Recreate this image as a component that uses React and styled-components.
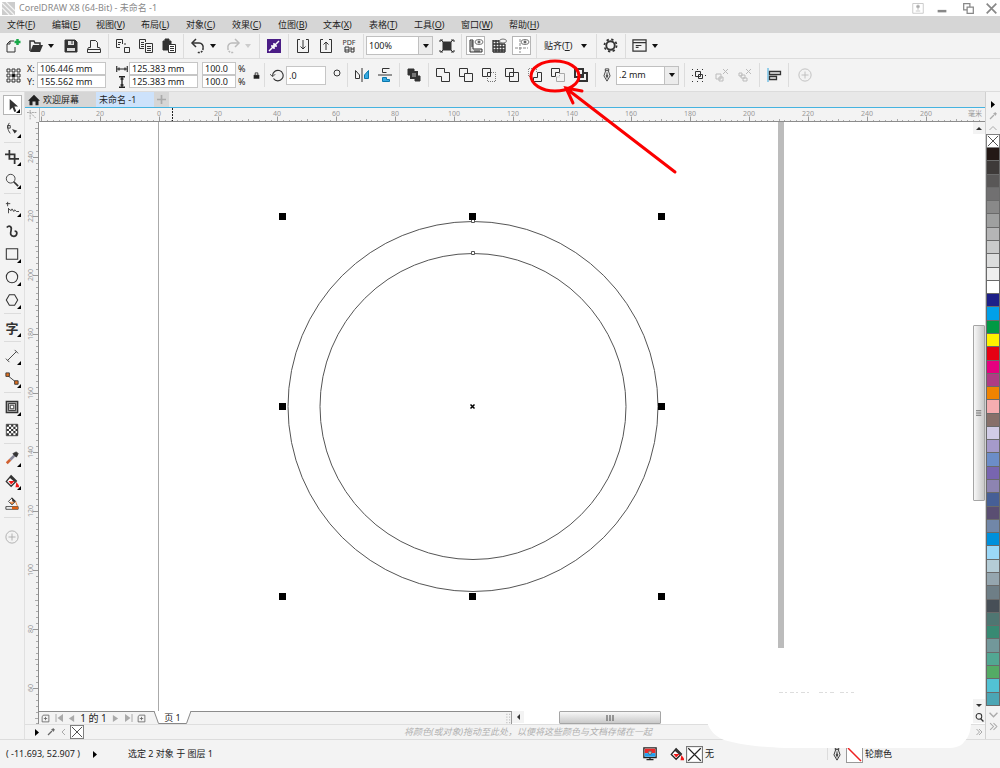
import React from 'react';
import styled, { createGlobalStyle } from 'styled-components';

const GlobalStyle = createGlobalStyle`
  * {
    box-sizing: border-box;
  }
  body {
    margin: 0;
  }
  button, input, select {
    font: inherit;
    color: inherit;
    margin: 0;
    padding: 0;
    border: 0;
    background: none;
  }
`;

const Shell = styled.div`
  position: relative;
  display: flex;
  flex-direction: column;
  height: 100vh;
  min-height: 640px;
  overflow: hidden;
  background: #f3f3f3;
  color: #222;
  font-family: 'Noto Sans', 'Noto Sans CJK SC', sans-serif;
  font-size: 9px;
  line-height: 12px;
  white-space: nowrap;
`;

const Svg = styled.svg`
  display: block;
  flex: none;
  fill: none;
  stroke: currentColor;
  stroke-width: 1;
`;

/* title + menu */
const TitleBar = styled.header`
  display: flex;
  align-items: center;
  flex: none;
  height: 16px;
  padding-left: 2px;
  gap: 4px;
  background: white;
  color: #888;
`;
const Title = styled.h1`
  flex: 1;
  margin: 0;
  font-size: 9px;
  font-weight: normal;
`;
const WindowButton = styled.button`
  display: flex;
  align-items: center;
  justify-content: center;
  width: ${({ $w }) => $w || 22}px;
  height: 16px;
`;
const MenuBar = styled.nav`
  display: flex;
  align-items: center;
  flex: none;
  height: 17px;
  padding-left: 7px;
  gap: 16px;
  background: #d6d6d6;
`;
const MenuItem = styled.button`
  width: ${({ $w }) => $w || 29}px;
  text-align: left;
`;

/* bars */
const Toolbar = styled.div`
  display: flex;
  align-items: center;
  flex: none;
  height: ${({ $h }) => $h}px;
  padding-left: 1px;
  border-bottom: 1px solid #dcdcdc;
`;
const IconButton = styled.button`
  display: flex;
  align-items: center;
  justify-content: center;
  flex: none;
  width: ${({ $w }) => $w || 23}px;
  height: 20px;
  color: ${({ $off }) => ($off ? '#bbb' : '#333')};
`;
const BoxedButton = styled(IconButton)`
  width: 19px;
  height: 19px;
  margin: 0 2px;
  border: 1px solid #b5b5b5;
  background: white;
`;
const TextButton = styled.button`
  display: flex;
  align-items: center;
  gap: 8px;
  padding: 0 5px;
`;
const Sep = styled.span`
  flex: none;
  width: 6px;
  height: ${({ $h }) => $h || 24}px;
  border-left: 3px solid transparent;
  background: linear-gradient(90deg, #dcdcdc 1px, transparent 1px) no-repeat;
`;
const Field = styled.input`
  width: ${({ $w }) => $w}px;
  height: ${({ $h }) => $h || 13}px;
  padding: 0 2px;
  border: 1px solid #c6c6c6;
  background: white;
`;
const FieldGrid = styled.div`
  display: grid;
  grid-template-columns: ${({ $label }) => $label}px auto;
  align-items: center;
  margin-left: ${({ $gap }) => $gap}px;
`;
const UnitGrid = styled.div`
  display: grid;
  grid-template-columns: 34px 14px;
  column-gap: 2px;
  align-items: center;
  margin-left: 4px;
`;
const Picker = styled.div`
  position: relative;
  width: ${({ $w }) => $w}px;
  height: 19px;
  margin-right: 2px;
  border: 1px solid #c0c0c0;
  background: white;

  select {
    display: block;
    width: 100%;
    height: 17px;
    padding-left: 2px;
    appearance: none;
  }
`;
const PickerArrow = styled.span`
  position: absolute;
  top: 0;
  right: 0;
  display: flex;
  align-items: center;
  justify-content: center;
  width: 14px;
  height: 17px;
  border-left: 1px solid #c0c0c0;
  background: #ececec;
  pointer-events: none;
`;

/* body */
const Body = styled.div`
  display: flex;
  flex: 1;
  min-height: 0;
`;
const Toolbox = styled.aside`
  display: flex;
  flex-direction: column;
  flex: none;
  width: 25px;
  padding-top: 3px;
  border-right: 1px solid #e0e0e0;
`;
const Tool = styled.button`
  position: relative;
  display: flex;
  align-items: center;
  justify-content: center;
  flex: none;
  width: 24px;
  height: ${({ $h }) => $h || 23}px;
  color: ${({ $off }) => ($off ? '#aaa' : '#333')};
`;
const ActiveTool = styled(Tool)`
  width: 19px;
  height: 20px;
  margin: 0 0 2px 3px;
  border: 1px solid #b5b5b5;
  background: white;
`;
const ToolGlyph = styled.b`
  font-size: 13px;
`;
const Flyout = styled.span`
  position: absolute;
  right: ${({ $r }) => $r || 3}px;
  bottom: ${({ $b }) => $b || 2}px;
  border: 2px solid #000;
  border-top-color: transparent;
  border-left-color: transparent;
`;
const ToolSep = styled.span`
  flex: none;
  height: 1px;
  margin: 2px 3px 2px 4px;
  background: #dcdcdc;
`;
const Workspace = styled.main`
  display: grid;
  flex: 1;
  min-width: 0;
  grid-template-columns: 14px minmax(0, 1fr) 12px;
  grid-template-rows: 16px 14px minmax(0, 1fr) 13px 15px;
`;
const TabBar = styled.div`
  grid-column: 1 / -1;
  display: flex;
  border-bottom: 1px solid #45b3e0;
  background: #e8e8e8;
`;
const Tab = styled.button`
  display: flex;
  align-items: center;
  gap: 3px;
  width: ${({ $w }) => $w}px;
  padding-left: 3px;
  background: ${({ $active }) => ($active ? '#cde2fb' : '#d6d6d6')};
`;
const Corner = styled.button`
  display: flex;
  align-items: center;
  justify-content: center;
  color: #999;
`;
const HRuler = styled.svg`
  grid-column: 2 / -1;
  width: 100%;
  height: 14px;
  border-bottom: 1px solid #8c8c8c;
  border-left: 1px solid #bbb;
`;
const VRuler = styled.svg`
  grid-row: 3 / 5;
  width: 14px;
  height: 100%;
  border-right: 1px solid #8c8c8c;
`;
const RulerText = styled.text`
  font-family: 'Noto Sans', 'Noto Sans CJK SC', sans-serif;
  font-size: 7px;
  fill: #999;
  text-anchor: middle;
`;
const Canvas = styled.svg`
  width: 100%;
  height: 100%;
  background: white;
`;
const VScroll = styled.div`
  display: flex;
  flex-direction: column;
  background: white;
`;
const ScrollButton = styled.button`
  display: flex;
  align-items: center;
  justify-content: center;
  flex: none;
  width: 12px;
  height: 12px;
  background: #f3f3f3;
  color: #333;
`;
const Track = styled.span`
  flex: ${({ $size }) => $size};
`;
const Thumb = styled.span`
  display: flex;
  align-items: center;
  justify-content: center;
  flex: ${({ $size }) => $size};
  border: 1px solid #a5a5a5;
  border-radius: 1px;
  color: #666;
  background: linear-gradient(${({ $dir }) => $dir}, #f7f7f7, #e0e0e0 50%, #c9c9c9);
`;
const NavRow = styled.div`
  grid-column: 2 / 4;
  display: flex;
  background: white;
`;
const PageNav = styled.div`
  display: flex;
  align-items: center;
  flex: 0 0 50%;
  border-top: 1px solid #8c8c8c;
  border-right: 1px solid #999;
  background: #f3f3f3;
`;
const NavButton = styled.button`
  display: flex;
  align-items: center;
  justify-content: center;
  flex: none;
  width: 13px;
  height: 12px;
  color: ${({ $dark }) => ($dark ? '#666' : '#aaa')};
`;
const PageCount = styled.span`
  width: 31px;
  text-align: center;
  font-size: 10px;
`;
const PageTab = styled.button`
  position: relative;
  width: 37px;
  height: 13px;
  margin: -1px auto 0 6px;

  svg {
    position: absolute;
    inset: 0;
  }
  span {
    position: relative;
  }
`;
const DocPalette = styled.div`
  grid-column: 1 / -1;
  display: flex;
  align-items: center;
  padding-left: 6px;
  border-top: 1px solid #dedede;
`;
const Hint = styled.p`
  flex: 1;
  margin: 0;
  text-align: center;
  font-style: italic;
  color: #b0b0b0;
`;
const ColorBar = styled.aside`
  display: flex;
  flex-direction: column;
  flex: none;
  width: 15px;
  padding: 6px 0 7px;
  border-left: 1px solid #d0d0d0;
`;
const ColorButton = styled.button`
  display: flex;
  align-items: center;
  justify-content: center;
  flex: none;
  height: ${({ $h }) => $h || 12}px;
  color: ${({ $dark }) => ($dark ? '#000' : '#aaa')};
`;
const Swatches = styled.div`
  display: flex;
  flex-direction: column;
  flex: 1;
  margin-bottom: 2px;
  border: solid #6a6a6a;
  border-width: 0 1px;
`;
const Swatch = styled.button`
  flex: 1;
  border-bottom: 1px solid #6a6a6a;
  background: ${({ $color }) => $color};
`;

/* status */
const StatusBar = styled.footer`
  display: flex;
  align-items: center;
  flex: none;
  height: 29px;
  padding: 0 102px 0 6px;
  border-top: 1px solid #dcdcdc;
`;
const Coords = styled.span`
  width: 87px;
`;
const Selection = styled.span`
  flex: 1;
  margin-left: 27px;
`;
const StatusItem = styled.span`
  display: flex;
  align-items: center;
  gap: 2px;
  width: ${({ $w }) => $w}px;
`;
const Eraser = styled.svg`
  position: absolute;
  right: 27px;
  bottom: 19px;
  width: 266px;
  height: 27px;
  fill: white;
  pointer-events: none;
`;
const Annotation = styled.svg`
  position: absolute;
  top: 55px;
  left: 520px;
  width: 170px;
  height: 125px;
  fill: none;
  stroke: #fb0000;
  stroke-width: 3;
  stroke-linecap: round;
  pointer-events: none;
`;

const Icon = ({ size = 16, children, ...rest }) => (
  <Svg width={size} height={size} viewBox="0 0 16 16" aria-hidden="true" {...rest}>
    {children}
  </Svg>
);
const Caret = ({ off }) => (
  <Svg width="8" height="4" viewBox="0 0 8 4">
    <path d="M1 0h6L4 4z" stroke="none" fill={off ? '#ccc' : '#111'} />
  </Svg>
);
const CaretButton = styled(IconButton)`
  width: 12px;
  justify-content: flex-start;
`;
const Play = () => (
  <Svg width="5" height="7" viewBox="0 0 5 7"><path d="M0 0l4 3.5L0 7z" fill="#000" stroke="none" /></Svg>
);
const Plus = ({ size = 14 }) => (
  <Icon size={size}><circle cx="8" cy="8" r="7" /><path d="M8 4v8M4 8h8" /></Icon>
);
const CrossBox = ({ size = 15, color = '#444' }) => (
  <Svg width={size} height={size} viewBox="0 0 15 15">
    <rect x=".5" y=".5" width="14" height="14" fill="#fff" stroke="#777" />
    <path d="M2 2l11 11M13 2L2 13" stroke={color} />
  </Svg>
);
const Bucket = () => (
  <Icon size={14}>
    <path d="M7 2L1.5 8.5 7 14l6-6z" fill="#fff" strokeWidth="1.5" />
    <path d="M7 2l6 6-2 1-6-5z" fill="#333" stroke="none" />
    <path d="M4 8h7l-4 4z" fill="#f01818" stroke="none" />
    <path d="M13 9l3 4v2h-4z" fill="#f01818" stroke="none" />
  </Icon>
);
const Nib = () => (
  <Icon size={14}><path d="M6 1h4v2H6zM6.5 3L4.500 9l3.500 6 3.500-6L9.500 3M8 5v7" /><circle cx="8" cy="9" r="1" /></Icon>
);
const Dropper = ({ size = 8 }) => (
  <Icon size={size}><path d="M2 14l8-8" strokeWidth="2.5" /><path d="M9 3l4 4 2-4-2-2z" fill="currentColor" /></Icon>
);
const PageIcon = () => (
  <Icon size={9}><path d="M4 2h10v12H2V5zM8 5v6M5 8h6" strokeWidth="1.5" /></Icon>
);

const menus = [
  ['文件', 'F'], ['编辑', 'E', 28], ['视图', 'V'], ['布局', 'L'], ['对象', 'C', 30],
  ['效果', 'C', 30], ['位图', 'B'], ['文本', 'X', 30], ['表格', 'T'],
  ['工具', 'O', 31], ['窗口', 'W', 32], ['帮助', 'H', 32],
];

const colors = [
  '#231815', '#3e3a39', '#595757', '#717071', '#898989', '#9fa0a0', '#b5b5b6',
  '#c9caca', '#dcdddd', '#efefef', '#ffffff', '#1d2088', '#00a0e9', '#009944',
  '#fff100', '#e60012', '#e4007f', '#ae3c84', '#f08300', '#f5adb0', '#87706a',
  '#d1cce6', '#a59aca', '#6c8dc8', '#7865b0', '#8d84b1', '#465f96', '#5a4e72',
  '#7187a8', '#0090dc', '#9bd8f8', '#b4ccd6', '#95a6af', '#6e7e86', '#474f57',
  '#4f7672', '#388a73', '#72989a', '#52a793', '#54ab65', '#52c2d4', '#4ba6b5',
];

const standardIcons = {
  create: <Icon><path d="M9 3H5L2 6v8h8V9" /><path d="M5 3v3H2" /><path d="M12.5 1v6M9.5 4h6" stroke="#18a848" strokeWidth="2.5" /></Icon>,
  open: <Icon><path d="M2 13V3h4l1 2h5v2" strokeWidth="1.5" /><path d="M2 14l3-7h10l-3 7z" fill="#333" stroke="none" /></Icon>,
  save: <Icon><path d="M2 2h10l2 2v10H2z" fill="#333" /><path d="M5 3h6v4H5zM4 10h8v3H4z" fill="#ddd" stroke="none" /><path d="M9 3v3" /></Icon>,
  print: <Icon><path d="M4.500 9.500v-7h5l2 2v5M4.500 9.500h-2l-1 2v3h13v-3l-1-2h-2M1.500 11.500h13" /></Icon>,
  cut: <Icon><path d="M7.500 6V1.500h-6v8H5M3 4.500h3M3 6.500h2M9 6h2M9.500 9.500h5v5h-5z" /></Icon>,
  copy: <Icon><path d="M6 10.500H1.500v-9h6V4M3 4.500h3M3 6.500h3M3 8.500h3M7.500 5.500h7v9h-7zM9 8.500h4M9 10.500h4M9 12.500h4" /></Icon>,
  paste: <Icon><path d="M2 3h8v9H2z" fill="#333" /><path d="M4 1h4v2H4z" fill="#333" /><path d="M7.500 6.500h7v8h-7z" fill="#fff" /><path d="M9 8.500h4M9 10.500h4M9 12.500h4" /></Icon>,
  undo: <Icon><path d="M3 5h6a4 4 0 014 5" strokeWidth="1.5" /><path d="M13 10a4 4 0 01-6 4" strokeWidth="1.5" strokeDasharray="2 1" /><path d="M6 1L2 5l4 4" strokeWidth="1.5" /></Icon>,
  redo: <Icon><path d="M13 5H7a4 4 0 00-4 5" strokeWidth="1.5" /><path d="M3 10a4 4 0 006 4" strokeWidth="1.5" strokeDasharray="2 1" /><path d="M10 1l4 4-4 4" strokeWidth="1.5" /></Icon>,
  launch: <Icon><path d="M1 1h14v14H1z" fill="#4b1d86" stroke="none" /><path d="M3 13l4-4M5 8h3v3M13 3L9 7M8 5v3h3" stroke="#fff" strokeWidth="1.5" /></Icon>,
  import: <Icon><path d="M5 1.500H2.500v13h11v-13H11M8 2v9M5.500 8.500L8 11l2.500-2.500" /></Icon>,
  export: <Icon><path d="M5 1.500H2.500v13h11v-13H11M8 12V4M5.500 6.500L8 4l2.500 2.500" /></Icon>,
};

const StandardButton = ({ name, off }) => (
  <IconButton aria-label={name} $off={off}>{standardIcons[name]}</IconButton>
);

const shapingIcons = {
  weld: <path d="M1.500 1.500h8v4h5v9h-8v-5h-5z" />,
  trim: <path d="M9.500 6V1.500h-8v8H6M6.500 6.500h8v8h-8z" />,
  intersect: <><path d="M9.500 6V1.500h-8v8H6M6.500 5.500h3v4h-3z" /><path d="M10 5.500h4.500v9h-8V10" strokeDasharray="1 1" stroke="#777" /></>,
  simplify: <path d="M1.500 1.500h8v8h-8zM5.500 5.500h9v9h-9z" />,
  frontMinusBack: <><path d="M9.500 5V1.500h-8v8H6" strokeDasharray="1 1" stroke="#888" /><path d="M10.500 5.500h4v9h-8v-4h4z" /></>,
  backMinusFront: <><path d="M1.500 1.500h8v4h-4v4h-4z" /><path d="M10 6.500h4.500v8h-8V10" stroke="#aaa" /><path d="M9.500 6v4H6" stroke="#aaa" strokeDasharray="1 1" /></>,
  boundary: <><path d="M2 2h8v4h4v8H6v-4H2z" strokeWidth="2" /><path d="M7 7h4v4H7z" fill="#333" stroke="none" /></>,
};

const tools = [
  { name: 'shape', fly: true, art: <><path d="M5 1C2 5 3 9 6 13M3 4h3v3H3z" /><path d="M8 8l6 2-3 3z" fill="#333" stroke="none" /></> },
  null,
  { name: 'crop', fly: true, art: <path d="M5 0v10h11M0 5h11v11" strokeWidth="2" /> },
  { name: 'zoom', fly: true, art: <><circle cx="6.500" cy="6.500" r="5" /><path d="M10 10l5 5" strokeWidth="2" /></> },
  null,
  { name: 'freehand', fly: true, art: <path d="M3 1v5M1 3h5M4 8v6M4 9l3 2 1-2 2 3 1-2 2 2h3" /> },
  { name: 'artistic media', art: <path d="M2 4c3-3 6-1 5 3s-1 7 3 7 5-6 1-6" strokeWidth="2" /> },
  { name: 'rectangle', fly: true, art: <path d="M1.500 2h13v12h-13z" strokeWidth="1.200" /> },
  { name: 'ellipse', fly: true, art: <circle cx="8" cy="8" r="6.500" strokeWidth="1.200" /> },
  { name: 'polygon', fly: true, art: <path d="M5 2h6l3.500 6L11 14H5L1.500 8z" strokeWidth="1.200" /> },
  null,
  { name: 'text', fly: true, text: '字' },
  null,
  { name: 'dimension', fly: true, art: <path d="M3 13L13 3M1 11l4 4M11 1l4 4" /> },
  { name: 'connector', fly: true, art: <><path d="M3 4l10 8" /><path d="M1 1h4v4H1zM11 10h4v4h-4z" fill="#e07020" /></> },
  null,
  { name: 'effects', fly: true, art: <><path d="M1.500 1.500h13v13h-13z" fill="#999" strokeWidth="1.500" /><path d="M4 4h8v8H4z" fill="#ccc" /><path d="M6 6h4v4H6z" fill="#fff" /></> },
  { name: 'transparency', art: (
    <>
      <path d="M1.500 1.500h13v13h-13z" fill="#fff" />
      <path d="M2 3h13M2 8h13M2 13h13" strokeDasharray="2.500 2.500" strokeWidth="2.500" />
      <path d="M4.500 5.500H15M4.500 10.500H15" strokeDasharray="2.500 2.500" strokeWidth="2.500" />
    </>
  ) },
  null,
  { name: 'color eyedropper', fly: true, art: <><path d="M6 10l5-5" strokeWidth="3" stroke="#889" /><path d="M2 14l4-4" strokeWidth="3" stroke="#d06030" /><path d="M9 3l4 4 2-4-2-2z" fill="#333" /></> },
  { name: 'interactive fill', fly: true, bucket: true },
  { name: 'smart fill', art: <><path d="M8 1L4 5l4 4 4-4z" fill="#fff" /><path d="M8 1l4 4H9z" fill="#333" /><path d="M6 6h4L8 8zM12 5l2 5" stroke="#e07020" /><path d="M1 11h14v3H1z" fill="#fff" /><path d="M8 11h7v3H8z" fill="#e06010" stroke="none" /></> },
  null,
];

// 20 mm equals 59 px at the current zoom level
const STEP = 59;

const HorizontalRuler = () => {
  const labels = ['0', '20', '0', '20', '40', '60', '80', '100', '120', '140', '160', '180', '200', '220', '240', '260'];
  return (
    <HRuler>
      <defs>
        <pattern id="hticks" x="1" width={STEP} height="14" patternUnits="userSpaceOnUse">
          <path d="M.5 8.500v5" stroke="#999" />
          <path d="M6.500 12v1M12.500 12v1M18.500 12v1M24.500 12v1M30.500 11v2M35.500 12v1M41.500 12v1M47.500 12v1M53.500 12v1" stroke="#aaa" />
        </pattern>
      </defs>
      <rect width="100%" height="14" fill="url(#hticks)" />
      {labels.map((label, i) => (
        <RulerText key={i} x={i * STEP + (i ? 1 : 3)} y="8">{label}</RulerText>
      ))}
      <RulerText x="935" y="8">毫米</RulerText>
      <path d="M132.500 0v13" stroke="#222" strokeDasharray="2 1" />
    </HRuler>
  );
};

const VerticalRuler = () => {
  const labels = ['240', '220', '200', '180', '160', '140', '120', '100', '80', '60'];
  return (
    <VRuler>
      <defs>
        <pattern id="vticks" y="35" width="14" height={STEP} patternUnits="userSpaceOnUse">
          <path d="M8 .5h5" stroke="#999" />
          <path d="M11 6.500h2M11 12.500h2M11 18.500h2M11 24.500h2M10 30.500h3M11 35.500h2M11 41.500h2M11 47.500h2M11 53.500h2" stroke="#aaa" />
        </pattern>
      </defs>
      <rect width="14" height="100%" fill="url(#vticks)" />
      {labels.map((label, i) => (
        <RulerText key={label} transform={`translate(8 ${35 + i * STEP}) rotate(-90)`}>{label}</RulerText>
      ))}
    </VRuler>
  );
};

const Drawing = () => (
  <Canvas>
    <path d="M119.500 0V2000" stroke="#aaa" />
    <rect x="739" y="0" width="6" height="526" fill="#bcbcbc" />
    <g fill="none" stroke="#555">
      <circle cx="434" cy="284.500" r="185" />
      <circle cx="434" cy="284.500" r="153" />
      <path d="M432.500 97.500h3v3h-3zM432.500 129.500h3v3h-3z" fill="#fff" />
    </g>
    {[240, 430, 619].map((x) => [91, 281, 471].map((y) => (
      x === 430 && y === 281
        ? <path key="center" d="M431.500 282.500l4 4m0-4l-4 4" stroke="#000" strokeWidth="1.500" />
        : <rect key={`${x}-${y}`} x={x} y={y} width="7" height="7" fill="#000" />
    )))}
    <path d="M740 570.500h32M780 570.500h16M801 570.500h14" stroke="#ddd" strokeDasharray="4 2 2 3" />
  </Canvas>
);

const App = () => (
  <>
    <GlobalStyle />
    <Shell>
      <TitleBar>
        <Icon size={13} color="#aaa">
          <path d="M0 0h16v16H0z" fill="#ccc" stroke="none" />
          <path d="M0 1l15 15M5 0l11 11M0 7l9 9" stroke="#f4f4f4" strokeWidth="1.500" />
        </Icon>
        <Title>CorelDRAW X8 (64-Bit) - 未命名 -1</Title>
        <WindowButton aria-label="Account" $w={18}>
          <Icon size={12} color="#bbb"><path d="M1 2h14v13H1zM8 7v4M5 12h6" /><circle cx="8" cy="6" r="2" fill="#aaa" /></Icon>
        </WindowButton>
        <WindowButton aria-label="Minimize">
          <Icon size={10}><path d="M1 13h14" strokeWidth="4" /></Icon>
        </WindowButton>
        <WindowButton aria-label="Restore">
          <Icon size={11}><path d="M1 1h9v9H1z" strokeWidth="1.800" /><path d="M6 6h9v9H6z" fill="#fff" strokeWidth="1.800" /></Icon>
        </WindowButton>
        <WindowButton aria-label="Close" $w={17}>
          <Icon size={11}><path d="M1 1l14 14M15 1L1 15" strokeWidth="2.500" /></Icon>
        </WindowButton>
      </TitleBar>

      <MenuBar>
        {menus.map(([label, key, w]) => (
          <MenuItem key={label} $w={w}>{label}(<u>{key}</u>)</MenuItem>
        ))}
      </MenuBar>

      <Toolbar $h={26}>
        <StandardButton name="create" />
        <StandardButton name="open" />
        <CaretButton aria-label="Recent files"><Caret /></CaretButton>
        <StandardButton name="save" />
        <StandardButton name="print" />
        <Sep />
        <StandardButton name="cut" />
        <StandardButton name="copy" />
        <StandardButton name="paste" />
        <Sep />
        <StandardButton name="undo" />
        <CaretButton aria-label="Undo list"><Caret /></CaretButton>
        <StandardButton name="redo" off />
        <CaretButton aria-label="Redo list"><Caret off /></CaretButton>
        <Sep />
        <StandardButton name="launch" />
        <Sep />
        <StandardButton name="import" />
        <StandardButton name="export" />
        <IconButton aria-label="Publish to PDF">
          <Icon>
            <text x="8" y="7" textAnchor="middle" fontSize="7" fill="#333" stroke="none">PDF</text>
            <path d="M4 9h4v5H4zM10 9v5h3V9M4 12h4M10 11h3" />
          </Icon>
        </IconButton>
        <Sep />
        <Picker $w={67}>
          <select aria-label="Zoom level" defaultValue="100%"><option>100%</option></select>
          <PickerArrow><Caret /></PickerArrow>
        </Picker>
        <IconButton aria-label="Full screen">
          <Icon><path d="M4 4h8v8H4z" fill="#333" /><path d="M1 4V2h3M12 2h3v2M15 12v2h-3M4 14H1v-2M2 2l2 2M14 2l-2 2M2 14l2-2M14 14l-2-2" /></Icon>
        </IconButton>
        <Sep />
        <BoxedButton aria-label="Show rulers">
          <Icon><path d="M2 2h3v9h9v3H2zM3 4h2M3 6h2M3 8h2M7 12v2M9 12v2M11 12v2" fill="#ddd" /><ellipse cx="11" cy="4" rx="4" ry="2.500" stroke="#777" /><circle cx="11" cy="4" r="1" /></Icon>
        </BoxedButton>
        <IconButton aria-label="Show grid">
          <Icon><path d="M2 3h6M2 6h12M2 9h12M2 12h12M2 14h12M2 2v12M5 2v12M8 2v12M11 6v8M14 6v8" strokeWidth="1.300" /><ellipse cx="12" cy="3" rx="3.500" ry="2" stroke="#777" /></Icon>
        </IconButton>
        <BoxedButton aria-label="Show guidelines">
          <Icon><path d="M6 1v14M1 10h13" strokeDasharray="3 1" stroke="#888" /><ellipse cx="11" cy="4" rx="4" ry="2.500" stroke="#777" /><circle cx="11" cy="4" r="1" /></Icon>
        </BoxedButton>
        <Sep />
        <TextButton><span>贴齐(<u>T</u>)</span><Caret /></TextButton>
        <Sep />
        <IconButton aria-label="Options">
          <Icon size={15}><circle cx="8" cy="8" r="4.500" strokeWidth="2" /><circle cx="8" cy="8" r="6.500" strokeWidth="1.800" strokeDasharray="2.500 2.600" /></Icon>
        </IconButton>
        <Sep />
        <IconButton aria-label="Application launcher">
          <Icon size={15}><path d="M1 2h14v12H1zM1 5h14M4 8h6M4 10h3" strokeWidth="1.300" /></Icon>
        </IconButton>
        <CaretButton aria-label="Launcher list"><Caret /></CaretButton>
      </Toolbar>

      <Toolbar $h={33}>
        <IconButton aria-label="Object origin">
          <Icon><path d="M2 2h3v3H2zM7 2h3v3H7zM12 2h3v3h-3zM2 7h3v3H2zM12 7h3v3h-3zM2 12h3v3H2zM7 12h3v3H7zM12 12h3v3h-3z" /><path d="M7 7h3v3H7z" fill="#000" /></Icon>
        </IconButton>
        <FieldGrid $label={10} $gap={3}>
          <label htmlFor="pos-x">X:</label>
          <Field id="pos-x" $w={69} defaultValue="106.446 mm" />
          <label htmlFor="pos-y">Y:</label>
          <Field id="pos-y" $w={69} defaultValue="155.562 mm" />
        </FieldGrid>
        <FieldGrid $label={13} $gap={10}>
          <label htmlFor="width" aria-label="Width">
            <Icon size={12}><path d="M1 4v8M15 4v8M1 8h14M4 6v4M12 6v4" strokeWidth="1.500" /></Icon>
          </label>
          <Field id="width" $w={69} defaultValue="125.383 mm" />
          <label htmlFor="height" aria-label="Height">
            <Icon size={12}><path d="M4 1h8M4 15h8M8 1v14M6 4h4M6 12h4" strokeWidth="1.800" /></Icon>
          </label>
          <Field id="height" $w={69} defaultValue="125.383 mm" />
        </FieldGrid>
        <UnitGrid>
          <Field aria-label="Scale X" $w={34} defaultValue="100.0" /><span>%</span>
          <Field aria-label="Scale Y" $w={34} defaultValue="100.0" /><span>%</span>
        </UnitGrid>
        <IconButton aria-label="Lock ratio" $w={9}>
          <Icon size={7}><path d="M2 7h12v8H2z" fill="#222" /><path d="M5 7V2h6v5" strokeWidth="2" /></Icon>
        </IconButton>
        <Sep />
        <IconButton as="label" htmlFor="angle" aria-label="Rotation" $w={19}>
          <Icon size={14}><path d="M3 9a6 6 0 111 3" strokeWidth="1.300" /><path d="M0 7l3 3 3-3" /></Icon>
        </IconButton>
        <Field id="angle" $w={40} $h={19} defaultValue=".0" />
        <IconButton as="span" $w={18}>
          <Icon size={16}><circle cx="10" cy="6" r="3" /></Icon>
        </IconButton>
        <Sep />
        <IconButton aria-label="Mirror horizontally">
          <Icon><path d="M1.500 3.500v8h4V8zM8 1v14" /><path d="M14.500 3.500v8h-4V8z" fill="#36a9e1" stroke="#0a78ad" /></Icon>
        </IconButton>
        <IconButton aria-label="Mirror vertically">
          <Icon><path d="M12.500 1.500h-7v4h4M1 8h14" /><path d="M12.500 14.500h-7v-4h4v2h3z" fill="#36a9e1" stroke="#0a78ad" /></Icon>
        </IconButton>
        <Sep />
        <IconButton aria-label="Order">
          <Icon><path d="M2 2h6v6H2z" fill="#333" /><path d="M9 9h5v5H9z" fill="#333" /><path d="M5 5h6v6H5z" fill="#777" strokeWidth="2" /></Icon>
        </IconButton>
        <Sep />
        {Object.entries(shapingIcons).map(([name, art]) => (
          <IconButton key={name} aria-label={name}><Icon>{art}</Icon></IconButton>
        ))}
        <Sep />
        <IconButton as="span" $w={18}><Nib /></IconButton>
        <Picker $w={63}>
          <select aria-label="Outline width" defaultValue=".2 mm"><option>.2 mm</option></select>
          <PickerArrow><Caret /></PickerArrow>
        </Picker>
        <Sep />
        <IconButton aria-label="Group">
          <Icon><path d="M4.500 4.500h5v5h-5zM7.500 7.500h4v4h-4z" /><path d="M1 2.500h14M1 14.500h14" strokeDasharray="1 4" /><path d="M1.500 8v1M14.500 8v1" /></Icon>
        </IconButton>
        <IconButton aria-label="Ungroup" $off>
          <Icon><path d="M2 7h5v5H2zM5 10h4v4H5zM9 2l5 5M14 2L9 7" /></Icon>
        </IconButton>
        <IconButton aria-label="Ungroup all" $off>
          <Icon><path d="M2 6h3v3H2zM4 8h4v3H4zM6 11h4v3H6zM9 2l5 5M14 2L9 7" /></Icon>
        </IconButton>
        <Sep />
        <IconButton aria-label="Align and distribute">
          <Icon><path d="M2 1v14" stroke="#36a9e1" /><path d="M3.500 4.500h11v3h-11zM3.500 9.500h7v3h-7z" strokeWidth="1.300" /></Icon>
        </IconButton>
        <Sep />
        <IconButton aria-label="Customize" $w={28} $off><Plus /></IconButton>
      </Toolbar>

      <Body>
        <Toolbox>
          <ActiveTool aria-label="pick">
            <Icon size={15}><path d="M5 1v12l3-3 2 5 2-1-2-5h4z" fill="#333" stroke="none" /></Icon>
            <Flyout $r={1} $b={1} />
          </ActiveTool>
          {tools.map((tool, i) => (tool ? (
            <Tool key={tool.name} aria-label={tool.name}>
              {tool.text && <ToolGlyph>{tool.text}</ToolGlyph>}
              {tool.bucket && <Bucket />}
              {tool.art && <Icon size={14}>{tool.art}</Icon>}
              {tool.fly && <Flyout />}
            </Tool>
          ) : <ToolSep key={i} />))}
          <Tool aria-label="customize" $h={34} $off><Plus /></Tool>
        </Toolbox>

        <Workspace>
          <TabBar>
            <Tab $w={71}>
              <Icon size={12}><path d="M8 1L0 9h2v6h4v-5h4v5h4V9h2z" fill="#222" stroke="none" /></Icon>
              欢迎屏幕
            </Tab>
            <Tab $w={58} $active>未命名 -1</Tab>
            <Tab $w={15} aria-label="New document">
              <Icon size={9} color="#aaa"><path d="M8 0v16M0 8h16" strokeWidth="3" /></Icon>
            </Tab>
          </TabBar>
          <Corner aria-label="Ruler origin">
            <Icon size={10}><path d="M5 0v16M0 4h16M6 5l8 8" strokeWidth="1.300" strokeDasharray="3 1" /></Icon>
          </Corner>
          <HorizontalRuler />
          <VerticalRuler />
          <Drawing />
          <VScroll>
            <ScrollButton aria-label="Scroll up">
              <Svg width="6" height="3" viewBox="0 0 6 3"><path d="M0 3h6L3 0z" fill="#333" stroke="none" /></Svg>
            </ScrollButton>
            <Track $size={191} />
            <Thumb $size={175} $dir="90deg">
              <Icon size={6}><path d="M0 2h14M0 8h14M0 14h14" strokeWidth="2.500" /></Icon>
            </Thumb>
            <Track $size={198} />
            <ScrollButton aria-label="Scroll down">
              <Svg width="6" height="3" viewBox="0 0 6 3"><path d="M0 0h6L3 3z" fill="#333" stroke="none" /></Svg>
            </ScrollButton>
          </VScroll>

          <NavRow>
            <PageNav>
              <NavButton $dark aria-label="Add page before"><PageIcon /></NavButton>
              <NavButton aria-label="First page"><Icon size={8}><path d="M2 0v16" strokeWidth="2" /><path d="M16 0v16L5 8z" fill="currentColor" stroke="none" /></Icon></NavButton>
              <NavButton aria-label="Previous page"><Icon size={7}><path d="M14 0v16L2 8z" fill="currentColor" stroke="none" /></Icon></NavButton>
              <PageCount>1 的 1</PageCount>
              <NavButton aria-label="Next page"><Icon size={7}><path d="M2 0v16l12-8z" fill="currentColor" stroke="none" /></Icon></NavButton>
              <NavButton aria-label="Last page"><Icon size={8}><path d="M14 0v16" strokeWidth="2" /><path d="M0 0v16l11-8z" fill="currentColor" stroke="none" /></Icon></NavButton>
              <NavButton $dark aria-label="Add page after"><PageIcon /></NavButton>
              <PageTab>
                <svg width="37" height="13" viewBox="0 0 37 13"><path d="M0 0l4.500 12.500h28L37 0" fill="#fff" stroke="#888" /></svg>
                <span>页 1</span>
              </PageTab>
              <Icon size={11} color="#bbb"><path d="M10 1v14M14 1v14" strokeDasharray="2 2" strokeWidth="1.500" /></Icon>
            </PageNav>
            <ScrollButton aria-label="Scroll left">
              <Svg width="3" height="6" viewBox="0 0 3 6"><path d="M3 0v6L0 3z" fill="#333" stroke="none" /></Svg>
            </ScrollButton>
            <Track $size={35} />
            <Thumb $size={101} $dir="180deg">
              <Icon size={8}><path d="M2 2v12M8 2v12M14 2v12" strokeWidth="2.500" /></Icon>
            </Thumb>
            <Track $size={313} />
            <ScrollButton aria-label="Navigator">
              <Icon size={9}><circle cx="7" cy="6" r="5" strokeWidth="1.800" /><path d="M10 10l5 5" strokeWidth="2.500" /></Icon>
            </ScrollButton>
          </NavRow>

          <DocPalette>
            <NavButton aria-label="Palette menu"><Play /></NavButton>
            <NavButton $dark aria-label="Pick color"><Dropper /></NavButton>
            <NavButton aria-label="Scroll palette left"><Icon size={8}><path d="M10 2L4 8l6 6" strokeWidth="2" /></Icon></NavButton>
            <CrossBox size={14} />
            <Hint>将颜色(或对象)拖动至此处，以便将这些颜色与文档存储在一起</Hint>
            <NavButton aria-label="Scroll palette right"><Icon size={8}><path d="M3 2l6 6-6 6M8 2l6 6-6 6" strokeWidth="2" /></Icon></NavButton>
          </DocPalette>
        </Workspace>

        <ColorBar>
          <ColorButton $dark aria-label="Palette menu"><Play /></ColorButton>
          <ColorButton aria-label="Pick color"><Dropper /></ColorButton>
          <ColorButton aria-label="Scroll up"><Icon size={8}><path d="M1 12l7-7 7 7" strokeWidth="2" /></Icon></ColorButton>
          <ColorButton $h={14} aria-label="No color"><CrossBox size={14} /></ColorButton>
          <Swatches>
            {colors.map((color) => <Swatch key={color} $color={color} aria-label={color} />)}
          </Swatches>
          <ColorButton aria-label="Scroll down"><Icon size={9}><path d="M1 5l7 7 7-7" strokeWidth="2.500" /></Icon></ColorButton>
          <ColorButton aria-label="Expand"><Icon size={9}><path d="M2 2l6 6-6 6M8 2l6 6-6 6" strokeWidth="1.800" /></Icon></ColorButton>
        </ColorBar>
      </Body>

      <StatusBar>
        <Coords>( -11.693, 52.907 )</Coords>
        <StatusItem $w={8}>
          <Play />
        </StatusItem>
        <Selection>选定 2 对象 于 图层 1</Selection>
        <StatusItem $w={27}>
          <Icon size={14}>
            <path d="M1 1h14v11H1z" fill="#fff" strokeWidth="1.500" />
            <path d="M2 2h12v5H2z" fill="#f02828" stroke="none" />
            <path d="M2 7h12v4H2z" fill="#1ea0f0" stroke="none" />
            <circle cx="8" cy="6.500" r="2" fill="#bbb" stroke="#666" />
            <path d="M4 14.500h8M8 12v2" strokeWidth="1.500" />
          </Icon>
        </StatusItem>
        <StatusItem $w={154}><Bucket /><CrossBox size={17} color="#222" /><span>无</span></StatusItem>
        <Sep $h={12} />
        <StatusItem $w={68}>
          <Nib />
          <Svg width="17" height="17" viewBox="0 0 17 17">
            <rect x=".5" y=".5" width="16" height="16" fill="#fff" stroke="#999" />
            <path d="M2 2l13 13" stroke="#e22" strokeWidth="1.500" />
          </Svg>
          <span>轮廓色</span>
        </StatusItem>
      </StatusBar>

      <Eraser viewBox="0 0 266 27">
        <path d="M0 0h264C264 8 262 15 257 20C254 24 249 26 240 26H78C50 25 30 22 17 18C8 14 3 9 0 0z" />
      </Eraser>
      <Annotation>
        <ellipse cx="35" cy="21" rx="24" ry="15" />
        <path d="M155 117L47 34M62 36L46 33l7 15" />
      </Annotation>
    </Shell>
  </>
);

export default App;
